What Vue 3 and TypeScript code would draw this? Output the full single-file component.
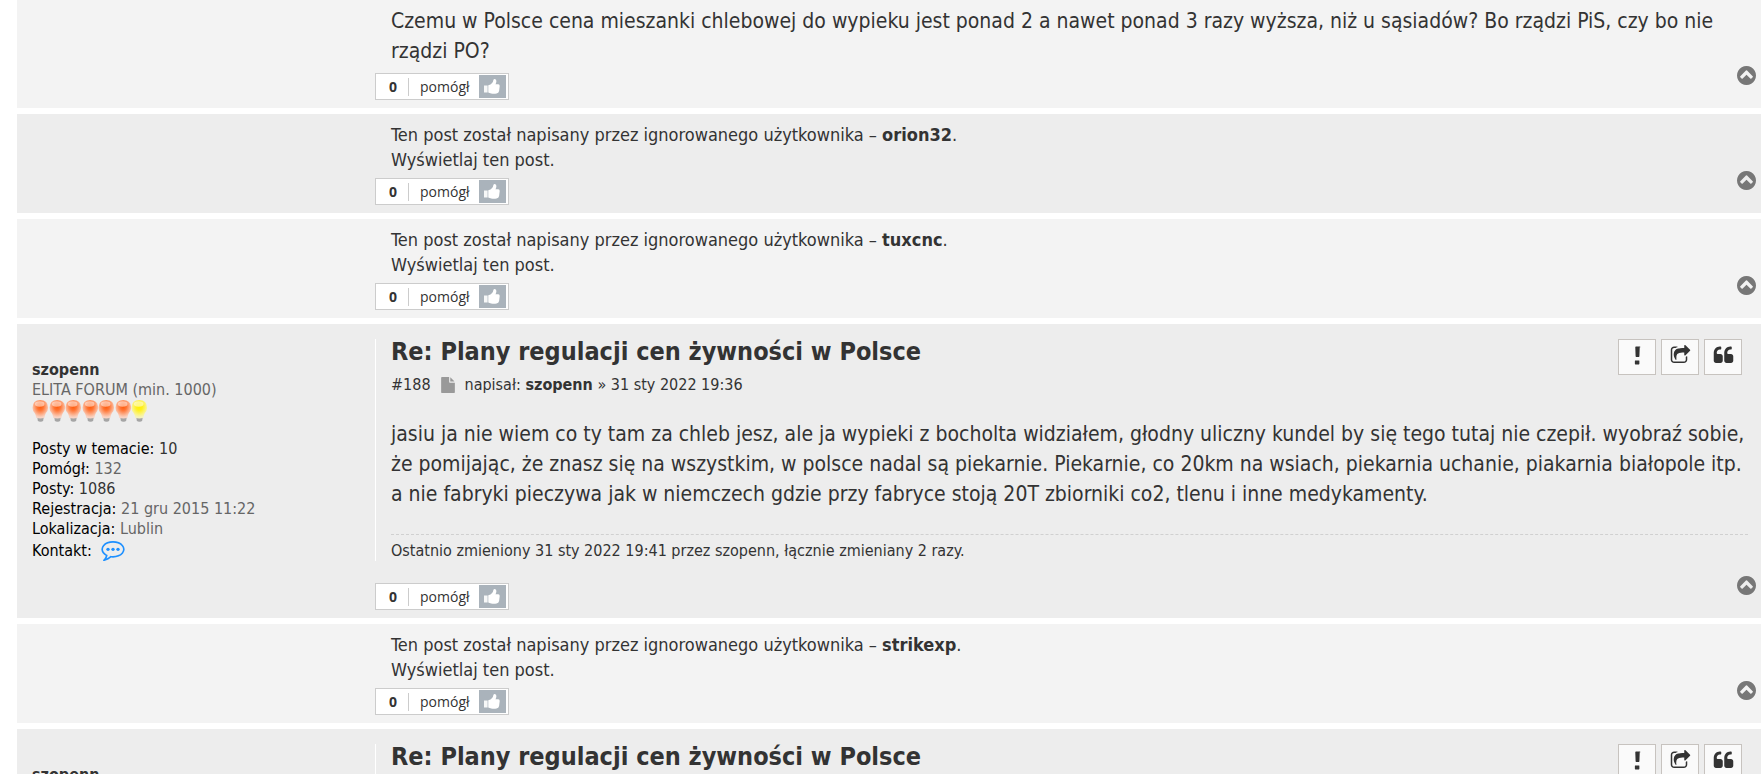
<script setup lang="ts">
interface Post {
  id: number
  kind: 'text' | 'ignored' | 'full' | 'opening'
  dark: boolean
  user?: string
  lines?: string[]
}

const posts: Post[] = [
  {
    id: 185,
    kind: 'text',
    dark: false,
    lines: [
      'Czemu w Polsce cena mieszanki chlebowej do wypieku jest ponad 2 a nawet ponad 3 razy wyższa, niż u sąsiadów? Bo rządzi PiS, czy bo nie rządzi PO?',
    ],
  },
  { id: 186, kind: 'ignored', dark: true, user: 'orion32' },
  { id: 187, kind: 'ignored', dark: false, user: 'tuxcnc' },
  {
    id: 188,
    kind: 'full',
    dark: true,
    user: 'szopenn',
    lines: [
      'jasiu ja nie wiem co ty tam za chleb jesz, ale ja wypieki z bocholta widziałem, głodny uliczny kundel by się tego tutaj nie czepił. wyobraź sobie,',
      'że pomijając, że znasz się na wszystkim, w polsce nadal są piekarnie. Piekarnie, co 20km na wsiach, piekarnia uchanie, piakarnia białopole itp.',
      'a nie fabryki pieczywa jak w niemczech gdzie przy fabryce stoją 20T zbiorniki co2, tlenu i inne medykamenty.',
    ],
  },
  { id: 189, kind: 'ignored', dark: false, user: 'strikexp' },
  { id: 190, kind: 'opening', dark: true, user: 'szopenn' },
]

const title = 'Re: Plany regulacji cen żywności w Polsce'

const details = [
  { label: 'Posty w temacie:', value: '10', link: true },
  { label: 'Pomógł:', value: '132', link: false },
  { label: 'Posty:', value: '1086', link: true },
  { label: 'Rejestracja:', value: '21 gru 2015 11:22', link: false },
  { label: 'Lokalizacja:', value: 'Lublin', link: false },
]

const actions = [
  {
    label: 'Zgłoś post',
    path: 'M1056 1376v224q0 26-19 45t-45 19h-256q-26 0-45-19t-19-45v-224q0-26 19-45t45-19h256q26 0 45 19t19 45zm30-1184l-28 768q-1 26-20.500 45t-45.500 19h-192q-26 0-45.500-19t-20.500-45l-28-768q-1-26 17.500-45t44.500-19h320q26 0 44.500 19t17.500 45z',
  },
  {
    label: 'Udostępnij',
    path: 'M1472 989v259q0 119-84.500 203.500t-203.500 84.500h-832q-119 0-203.500-84.500t-84.500-203.500v-832q0-119 84.500-203.500t203.500-84.500h255q13 0 22.500 9.500t9.500 22.500q0 27-26 32-77 26-133 60-10 4-16 4h-112q-66 0-113 47t-47 113v832q0 66 47 113t113 47h832q66 0 113-47t47-113v-214q0-19 18-29 28-13 54-37 16-16 35-8 21 9 21 29zm237-496l-384 384q-18 19-45 19-12 0-25-5-39-17-39-59v-192h-160q-323 0-438 131-119 137-74 473 3 23-20 34-8 2-12 2-16 0-26-13-10-14-21-31t-39.500-68.500-49.500-99.500-38.500-114-17.500-122q0-49 3.500-91t14-90 28-88 47-81.500 68.500-74 94.500-61.500 124.500-48.500 159.500-30.500 196.500-11h160v-192q0-42 39-59 13-5 25-5 26 0 45 19l384 384q19 19 19 45t-19 45z',
  },
  {
    label: 'Odpowiedz z cytatem',
    path: 'M832 960v384q0 80-56 136t-136 56h-384q-80 0-136-56t-56-136v-704q0-104 40.500-198.500t109.500-163.500 163.500-109.500 198.500-40.500h64q26 0 45 19t19 45v128q0 26-19 45t-45 19h-64q-106 0-181 75t-75 181v32q0 40 28 68t68 28h224q80 0 136 56t56 136zm896 0v384q0 80-56 136t-136 56h-384q-80 0-136-56t-56-136v-704q0-104 40.500-198.500t109.500-163.500 163.500-109.500 198.500-40.500h64q26 0 45 19t19 45v128q0 26-19 45t-45 19h-64q-106 0-181 75t-75 181v32q0 40 28 68t68 28h224q80 0 136 56t56 136z',
  },
]

const bulbs = ['red', 'red', 'red', 'red', 'red', 'red', 'yellow']
</script>

<template>
  <main class="topic">
    <svg class="defs" aria-hidden="true">
      <defs>
        <radialGradient id="bulb-red" cx="0.5" cy="0.36" r="0.58">
          <stop offset="0" stop-color="#ff5a0a" />
          <stop offset="0.35" stop-color="#ff7433" />
          <stop offset="0.8" stop-color="#fcb899" />
          <stop offset="1" stop-color="#f8d3c4" />
        </radialGradient>
        <radialGradient id="bulb-yellow" cx="0.5" cy="0.36" r="0.58">
          <stop offset="0" stop-color="#fff000" />
          <stop offset="0.35" stop-color="#fff01e" />
          <stop offset="0.8" stop-color="#faf48c" />
          <stop offset="1" stop-color="#f5f2bb" />
        </radialGradient>
      </defs>
    </svg>

    <article v-for="post in posts" :key="post.id" class="post" :class="[post.kind, { dark: post.dark }]">
      <div class="inner">
        <aside class="profile">
          <template v-if="post.kind === 'full' || post.kind === 'opening'">
            <a class="name" href="#">{{ post.user }}</a>
            <template v-if="post.kind === 'full'">
              <div class="rank">ELITA FORUM (min. 1000)</div>
              <div class="bulbs">
                <svg v-for="(b, i) in bulbs" :key="i" viewBox="0 0 16 22" aria-hidden="true">
                  <path d="M5 17.500h6.400l-.500 2.900q-.500 1.300-2.700 1.300t-2.700-1.300z" fill="#a5a5a5" />
                  <path d="M8 0q7.800.300 7.800 7.700 0 3-2.200 5.200-1 1.500-1.500 4.900-4 1.200-8.200 0-.400-3.400-1.500-4.900-2.200-2.200-2.200-5.200 0-7.400 7.800-7.700z" :fill="`url(#bulb-${b})`" />
                  <ellipse cx="7.400" cy="4" rx="4.800" ry="2.800" fill="#fff" fill-opacity="0.500" />
                </svg>
              </div>
              <dl class="details">
                <div v-for="d in details" :key="d.label">
                  <dt>{{ d.label }}</dt>&nbsp;<dd><a v-if="d.link" href="#">{{ d.value }}</a><template v-else>{{ d.value }}</template></dd>
                </div>
                <div class="contact">
                  <dt>Kontakt:</dt>
                  <dd>
                    <a href="#" aria-label="Skontaktuj się">
                      <svg viewBox="0 256 1792 1536" aria-hidden="true">
                        <path d="M896 384q-204 0-381.500 69.500t-282 187.500-104.500 255q0 112 71.500 213.500t201.500 175.500l87 50-27 96q-24 91-70 172 152-63 275-171l43-38 57 6q69 8 130 8 204 0 381.500-69.500t282-187.500 104.500-255-104.500-255-282-187.500-381.500-69.500zm896 512q0 174-120 321.500t-326 233-450 85.500q-70 0-145-8-198 175-460 242-49 14-114 22h-5q-15 0-27-10.500t-16-27.500v-1q-3-4-.500-12t2-10 4.500-9.500l6-9 7-8.500 8-9q7-8 31-34.500t34.500-38 31-39.500 32.500-51 27-59 26-76q-157-89-247.500-220t-90.500-281q0-174 120-321.500t326-233 450-85.500 450 85.500 326 233 120 321.500z" />
                        <circle cx="512" cy="896" r="128" /><circle cx="896" cy="896" r="128" /><circle cx="1280" cy="896" r="128" />
                      </svg>
                    </a>
                  </dd>
                </div>
              </dl>
            </template>
          </template>
        </aside>

        <div class="body">
          <p v-if="post.kind === 'text'" class="content">{{ post.lines?.[0] }}</p>

          <p v-else-if="post.kind === 'ignored'" class="ignore">
            Ten post został napisany przez ignorowanego użytkownika – <a class="strong" href="#">{{ post.user }}</a>.<br />
            <a href="#">Wyświetlaj ten post.</a>
          </p>

          <template v-else>
            <header class="head">
              <div>
                <h3><a href="#">{{ title }}</a></h3>
                <p v-if="post.kind === 'full'" class="author">
                  <span>#188</span>
                  <svg viewBox="128 0 1536 1792" aria-hidden="true">
                    <path d="M1152 512v-472q22 14 36 28l408 408q14 14 28 36h-472zm-128 32q0 40 28 68t68 28h544v1056q0 40-28 68t-68 28h-1344q-40 0-68-28t-28-68v-1600q0-40 28-68t68-28h800v544z" />
                  </svg>
                  <span>napisał: <a class="strong" href="#">{{ post.user }}</a> » 31 sty 2022 19:36</span>
                </p>
              </div>
              <div class="actions">
                <button v-for="a in actions" :key="a.label" type="button" :aria-label="a.label">
                  <svg viewBox="0 0 1792 1792" aria-hidden="true"><path :d="a.path" /></svg>
                </button>
              </div>
            </header>
            <template v-if="post.kind === 'full'">
              <p class="content">
                <template v-for="(line, i) in post.lines" :key="i"><br v-if="i > 0" />{{ line }}</template>
              </p>
              <p class="notice">Ostatnio zmieniony 31 sty 2022 19:41 przez szopenn, łącznie zmieniany 2 razy.</p>
            </template>
          </template>
        </div>
      </div>

      <footer v-if="post.kind !== 'opening'" class="foot">
        <div class="like">
          <strong>0</strong>
          <span class="word">pomógł</span>
          <button type="button" aria-label="Pomógł">
            <svg viewBox="0 0 16 15" aria-hidden="true">
              <path d="M0 6.500h3.600v7h-3.600z" fill-opacity="0.900" />
              <path d="M4.300 6.300q2.400-.500 4-2.500.800-1 1-2.600.300-1.200 1.500-1.200 1.700.300 1.600 2.200-.100 1.500-.900 3.100h2.800q1.500.200 1.400 1.700l-.600 5q-.400 2.400-2.600 2.600-3 .400-5.300-.100-1.700-.500-2.900-1.100z" />
            </svg>
          </button>
        </div>
        <a class="top" href="#" aria-label="Na górę">
          <svg viewBox="128 128 1536 1536" aria-hidden="true">
            <path d="M1293 1139l102-102q19-19 19-45t-19-45l-454-454q-19-19-45-19t-45 19l-454 454q-19 19-19 45t19 45l102 102q19 19 45 19t45-19l307-307 307 307q19 19 45 19t45-19zm371-243q0 209-103 385.500t-279.500 279.500-385.500 103-385.500-103-279.500-279.500-103-385.500 103-385.500 279.500-279.500 385.500-103 385.500 103 279.500 279.500 103 385.500z" />
          </svg>
        </a>
      </footer>
    </article>
  </main>
</template>

<style>
body {
  margin: 0;
  background: #fff;
}
</style>

<style scoped>
.topic {
  box-sizing: border-box;
  display: flex;
  flex-direction: column;
  gap: 6px;
  height: 100vh;
  overflow: hidden;
  padding: 0 2px 0 17px;
  color: #333;
  font-family: "DejaVu Sans Condensed", Tahoma, "Noto Sans", sans-serif;
  font-size: 16px;
  line-height: 20px;
}
.defs {
  position: absolute;
  width: 0;
  height: 0;
}
p, h3, dl, dd {
  margin: 0;
}
a {
  color: inherit;
  text-decoration: none;
}
svg {
  display: block;
  fill: currentColor;
}
.strong {
  font-weight: bold;
}
.post {
  flex: none;
  background: #f3f3f3;
}
.post.dark {
  background: #ededed;
}
.inner {
  display: flex;
}
.profile {
  box-sizing: border-box;
  flex: 0 0 358px;
  padding-left: 15px;
}
.body {
  flex: 1;
  min-width: 0;
  padding: 0 13px 0 16px;
}
.text .body {
  padding-top: 6px;
  padding-bottom: 7px;
}
.ignored .body {
  padding-top: 8px;
  padding-bottom: 6px;
}
.full .inner,
.opening .inner {
  padding-top: 15px;
}
.full .inner {
  padding-bottom: 22px;
}
.full .profile,
.opening .profile {
  padding-top: 21px;
}
.full .body,
.opening .body {
  padding-left: 15px;
  border-left: 1px solid #fff;
}
.content {
  font-size: 21px;
  line-height: 30px;
}
.ignore {
  font-size: 18px;
  line-height: 25px;
}
.name {
  display: block;
  font-weight: bold;
}
.rank,
dd {
  color: #666;
}
.bulbs {
  display: flex;
  width: 116px;
  height: 22px;
  margin-bottom: 17px;
}
.bulbs svg {
  flex: 1;
  min-width: 0;
}
dt {
  color: #000;
}
dt, dd {
  display: inline;
}
dd a {
  color: #333;
}
.contact {
  display: flex;
  align-items: center;
  gap: 9px;
  padding-top: 2px;
}
.contact a {
  color: #1e90ff;
}
.contact svg {
  width: 24px;
  height: 20px;
}
.head {
  display: flex;
  justify-content: space-between;
  align-items: flex-start;
  margin-bottom: 24px;
}
h3 {
  font-size: 25px;
  line-height: 25px;
}
.author {
  display: flex;
  align-items: center;
  gap: 10px;
  margin-top: 11px;
}
.author svg {
  width: 14px;
  height: 16px;
  color: #999;
}
.actions {
  display: flex;
  gap: 5px;
  padding-right: 6px;
}
.actions button {
  display: flex;
  justify-content: center;
  box-sizing: border-box;
  width: 38px;
  height: 36px;
  padding: 5px 0 0;
  border: 1px solid #c7c3bf;
  background: #fafafa;
  color: #333;
}
.actions svg {
  width: 21px;
  height: 21px;
}
.notice {
  margin-top: 25px;
  padding-top: 6px;
  border-top: 1px dashed #d0d0d0;
}
.foot {
  display: flex;
  justify-content: space-between;
  align-items: flex-start;
  padding: 0 5px 8px 358px;
}
.like {
  display: flex;
  align-items: center;
  box-sizing: border-box;
  height: 27px;
  padding: 1px 2px 1px 13px;
  border: 1px solid #ccc;
  background: #fff;
  font-family: "Open Sans", sans-serif;
  font-size: 14px;
  line-height: 18px;
}
.like strong {
  padding-right: 11px;
}
.word {
  padding: 0 9px 0 11px;
  border-left: 1px solid #ccc;
}
.like button {
  display: flex;
  align-items: center;
  justify-content: center;
  width: 27px;
  height: 23px;
  padding: 0;
  border: 0;
  background: #aab3bb;
  color: #fff;
}
.like svg {
  width: 16px;
  height: 15px;
}
.top {
  margin-top: -7px;
  color: #777;
}
.top svg {
  width: 19px;
  height: 19px;
}
</style>
